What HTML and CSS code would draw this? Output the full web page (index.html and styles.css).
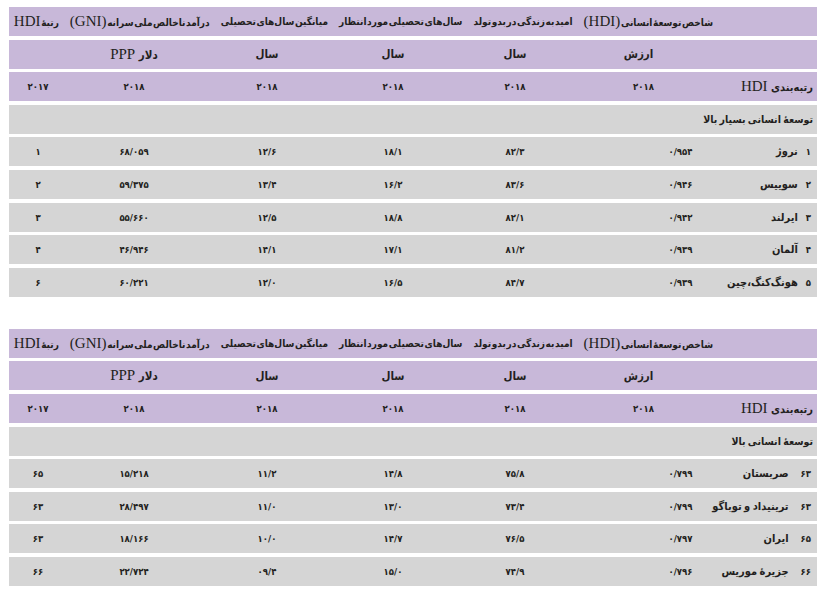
FILE: index.html
```html
<!DOCTYPE html>
<html lang="fa" dir="rtl">
<head>
<meta charset="utf-8">
<link rel="stylesheet" href="styles.css">
</head>
<body>
<div class="page">
  <div class="table">
    <div class="row head1">
      <span>شاخص توسعهٔ انسانی <span class="lat">(HDI)</span></span>
      <span>امید به زندگی در بدو تولد</span>
      <span>سال‌های تحصیلی مورد انتظار</span>
      <span>میانگین سال‌های تحصیلی</span>
      <span>درآمد ناخالص ملی سرانه <span class="lat">(GNI)</span></span>
      <span>رتبهٔ <span class="lat">HDI</span></span>
    </div>
    <div class="row purple grid head2">
      <div class="c lab"></div>
      <div class="c val">ارزش</div>
      <div class="c">سال</div>
      <div class="c">سال</div>
      <div class="c">سال</div>
      <div class="c">دلار <span class="lat">PPP</span></div>
      <div class="c"></div>
    </div>
    <div class="row purple grid head3">
      <div class="c lab">رتبه‌بندی <span class="lat">HDI</span></div>
      <div class="c val num">۲۰۱۸</div>
      <div class="c num">۲۰۱۸</div>
      <div class="c num">۲۰۱۸</div>
      <div class="c num">۲۰۱۸</div>
      <div class="c num">۲۰۱۸</div>
      <div class="c num">۲۰۱۷</div>
    </div>
    <div class="row gray section">توسعهٔ انسانی بسیار بالا</div>
    <div class="row gray grid data">
      <div class="c lab"><span class="rk">۱</span>نروژ</div>
      <div class="c val num">۰/۹۵۴</div>
      <div class="c num">۸۲/۳</div>
      <div class="c num">۱۸/۱</div>
      <div class="c num">۱۲/۶</div>
      <div class="c num">۶۸/۰۵۹</div>
      <div class="c num">۱</div>
    </div>
    <div class="row gray grid data">
      <div class="c lab"><span class="rk">۲</span>سوییس</div>
      <div class="c val num">۰/۹۴۶</div>
      <div class="c num">۸۳/۶</div>
      <div class="c num">۱۶/۲</div>
      <div class="c num">۱۳/۴</div>
      <div class="c num">۵۹/۳۷۵</div>
      <div class="c num">۲</div>
    </div>
    <div class="row gray grid data">
      <div class="c lab"><span class="rk">۳</span>ایرلند</div>
      <div class="c val num">۰/۹۴۲</div>
      <div class="c num">۸۲/۱</div>
      <div class="c num">۱۸/۸</div>
      <div class="c num">۱۲/۵</div>
      <div class="c num">۵۵/۶۶۰</div>
      <div class="c num">۳</div>
    </div>
    <div class="row gray grid data">
      <div class="c lab"><span class="rk">۴</span>آلمان</div>
      <div class="c val num">۰/۹۳۹</div>
      <div class="c num">۸۱/۲</div>
      <div class="c num">۱۷/۱</div>
      <div class="c num">۱۴/۱</div>
      <div class="c num">۴۶/۹۴۶</div>
      <div class="c num">۴</div>
    </div>
    <div class="row gray grid data">
      <div class="c lab"><span class="rk">۵</span>هونگ‌کنگ،چین</div>
      <div class="c val num">۰/۹۳۹</div>
      <div class="c num">۸۴/۷</div>
      <div class="c num">۱۶/۵</div>
      <div class="c num">۱۲/۰</div>
      <div class="c num">۶۰/۲۲۱</div>
      <div class="c num">۶</div>
    </div>
  </div>

  <div class="table t2">
    <div class="row head1">
      <span>شاخص توسعهٔ انسانی <span class="lat">(HDI)</span></span>
      <span>امید به زندگی در بدو تولد</span>
      <span>سال‌های تحصیلی مورد انتظار</span>
      <span>میانگین سال‌های تحصیلی</span>
      <span>درآمد ناخالص ملی سرانه <span class="lat">(GNI)</span></span>
      <span>رتبهٔ <span class="lat">HDI</span></span>
    </div>
    <div class="row purple grid head2">
      <div class="c lab"></div>
      <div class="c val">ارزش</div>
      <div class="c">سال</div>
      <div class="c">سال</div>
      <div class="c">سال</div>
      <div class="c">دلار <span class="lat">PPP</span></div>
      <div class="c"></div>
    </div>
    <div class="row purple grid head3">
      <div class="c lab">رتبه‌بندی <span class="lat">HDI</span></div>
      <div class="c val num">۲۰۱۸</div>
      <div class="c num">۲۰۱۸</div>
      <div class="c num">۲۰۱۸</div>
      <div class="c num">۲۰۱۸</div>
      <div class="c num">۲۰۱۸</div>
      <div class="c num">۲۰۱۷</div>
    </div>
    <div class="row gray section">توسعهٔ انسانی بالا</div>
    <div class="row gray grid data">
      <div class="c lab"><span class="rk">۶۳</span>صربستان</div>
      <div class="c val num">۰/۷۹۹</div>
      <div class="c num">۷۵/۸</div>
      <div class="c num">۱۴/۸</div>
      <div class="c num">۱۱/۲</div>
      <div class="c num">۱۵/۲۱۸</div>
      <div class="c num">۶۵</div>
    </div>
    <div class="row gray grid data">
      <div class="c lab"><span class="rk">۶۳</span>ترینیداد و توباگو</div>
      <div class="c val num">۰/۷۹۹</div>
      <div class="c num">۷۳/۴</div>
      <div class="c num">۱۳/۰</div>
      <div class="c num">۱۱/۰</div>
      <div class="c num">۲۸/۴۹۷</div>
      <div class="c num">۶۳</div>
    </div>
    <div class="row gray grid data">
      <div class="c lab"><span class="rk">۶۵</span>ایران</div>
      <div class="c val num">۰/۷۹۷</div>
      <div class="c num">۷۶/۵</div>
      <div class="c num">۱۴/۷</div>
      <div class="c num">۱۰/۰</div>
      <div class="c num">۱۸/۱۶۶</div>
      <div class="c num">۶۳</div>
    </div>
    <div class="row gray grid data">
      <div class="c lab"><span class="rk">۶۶</span>جزیرهٔ موریس</div>
      <div class="c val num">۰/۷۹۶</div>
      <div class="c num">۷۴/۹</div>
      <div class="c num">۱۵/۰</div>
      <div class="c num">۰۹/۴</div>
      <div class="c num">۲۲/۷۲۴</div>
      <div class="c num">۶۶</div>
    </div>
  </div>
</div>
</body>
</html>
```

FILE: styles.css
```css
html, body {
  margin: 0;
  padding: 0;
  background: #ffffff;
}

body {
  font-family: "DejaVu Sans Condensed", "DejaVu Sans", sans-serif;
  font-weight: bold;
  color: #231f20;
  font-size: 11px;
}

.page {
  direction: rtl;
  width: 808px;
  padding: 7px 10px 0 9px;
  display: flex;
  flex-direction: column;
  gap: 32px;
}

.table {
  display: flex;
  flex-direction: column;
  gap: 3.6px;
}

.row {
  height: 29px;
  box-sizing: border-box;
}

.purple {
  background: #c8b8d9;
}

.gray {
  background: #d5d5d5;
}

.head1 {
  background: #c8b8d9;
  display: flex;
  align-items: center;
  gap: 11px;
  padding-right: 104px;
  font-size: 10px;
  white-space: nowrap;
  letter-spacing: -0.3px;
  word-spacing: -2.5px;
  overflow: hidden;
}

.lat {
  font-family: "Liberation Serif", serif;
  font-weight: normal;
  font-size: 15px;
  letter-spacing: 0;
  word-spacing: 0;
}

.grid {
  display: grid;
  grid-template-columns: 97px 143px 124px 120px 132px 134px 58px;
  align-items: center;
}

.c {
  text-align: center;
  white-space: nowrap;
}

.c.lab {
  text-align: right;
  padding-right: 4px;
}

.head2 .c {
  font-size: 11.5px;
}

.head2 .c.val {
  padding-right: 20px;
}

.head3 .c.val {
  padding-right: 10px;
}

.data .c.val {
  padding-left: 64px;
}

.num {
  font-size: 9.5px;
  letter-spacing: 1.3px;
  font-weight: bold;
}

.section {
  display: flex;
  align-items: center;
  padding-right: 4px;
  font-size: 10.5px;
  word-spacing: -1px;
}

.data .c.lab {
  font-size: 11px;
  padding-right: 6px;
  word-spacing: -1px;
}

.rk {
  display: inline-block;
  margin-left: 8px;
  font-size: 9.5px;
}

.t2 .rk {
  margin-left: 12px;
}
```
